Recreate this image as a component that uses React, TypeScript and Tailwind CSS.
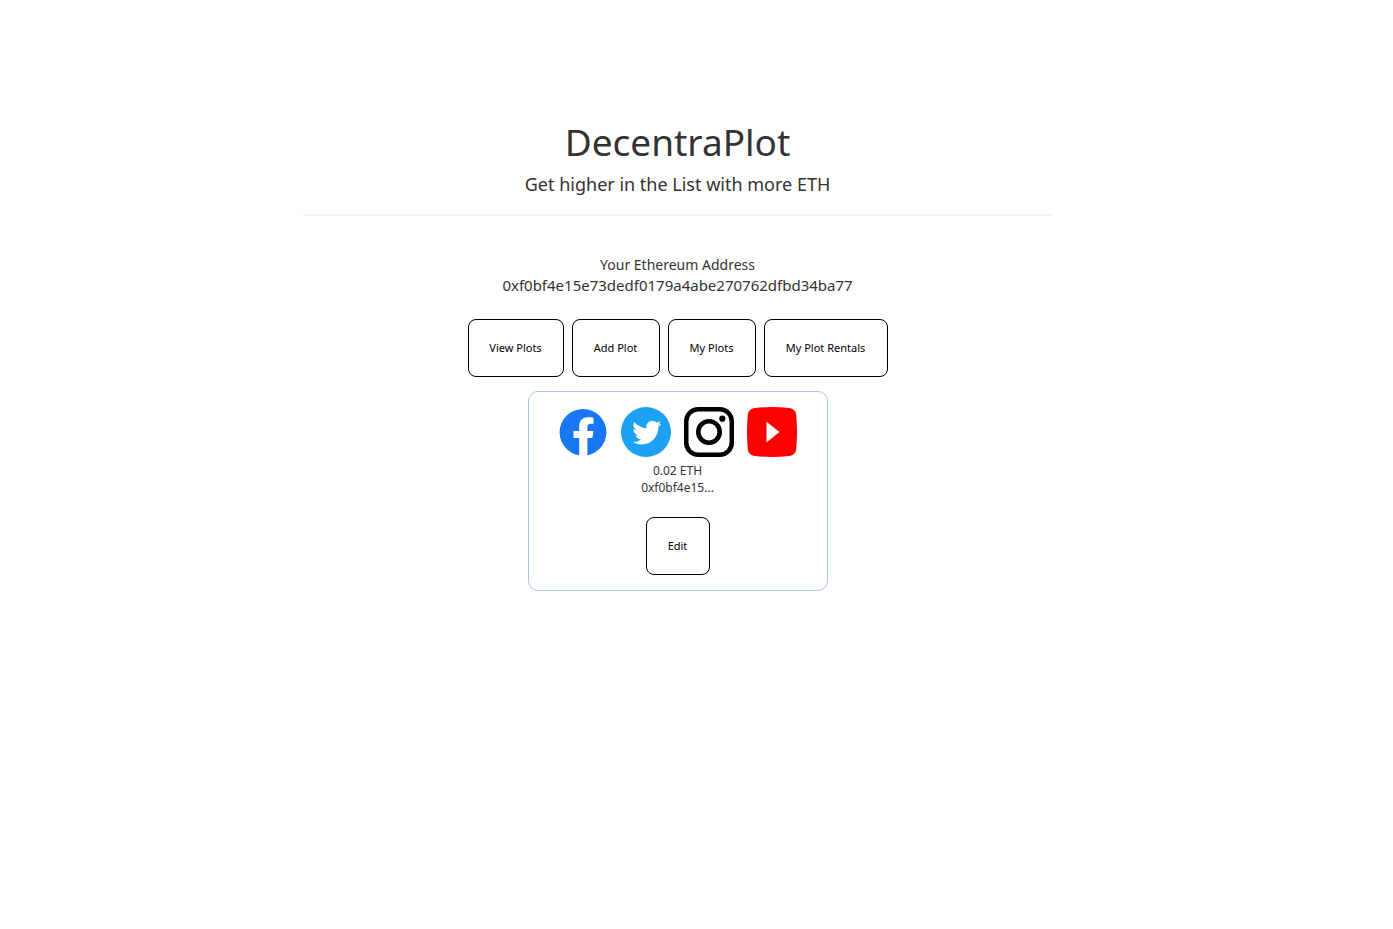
import React from "react";

const boxButton =
  "h-[58px] cursor-pointer rounded-lg border border-black bg-white text-[11px] leading-4 text-black hover:bg-gray-50";

const actions = [
  { label: "View Plots", width: "w-24" },
  { label: "Add Plot", width: "w-[88px]" },
  { label: "My Plots", width: "w-[88px]" },
  { label: "My Plot Rentals", width: "w-[124px]" },
];

function FacebookIcon() {
  return (
    <svg viewBox="0 0 50 50" className="size-[50px]" aria-hidden="true">
      <circle cx="25" cy="25.3" r="23.4" fill="#1877f2" />
      <path
        d="M21.2 50V31h-5.700v-6.900h5.700v-4.600c0-6.100 3.600-9.200 9.100-9.200 2.600 0 5.200.5 5.200.5v5.900h-2.600c-3 0-3.500 1.700-3.500 3.500v3.900h6l-1 6.900h-5V50z"
        fill="#fff"
      />
    </svg>
  );
}

function TwitterIcon() {
  return (
    <svg viewBox="0 0 50 50" className="size-[50px]" aria-hidden="true">
      <circle cx="25" cy="25" r="25" fill="#1da1f2" />
      <path
        transform="translate(11.300 11.200) scale(1.210)"
        d="M23.953 4.570a10 10 0 0 1-2.825.775 4.958 4.958 0 0 0 2.163-2.723c-.951.555-2.005.959-3.127 1.184a4.920 4.920 0 0 0-8.384 4.482C7.690 8.095 4.067 6.130 1.640 3.162a4.822 4.822 0 0 0-.666 2.475c0 1.710.870 3.213 2.188 4.096a4.904 4.904 0 0 1-2.228-.616v.060a4.923 4.923 0 0 0 3.946 4.827 4.996 4.996 0 0 1-2.212.085 4.936 4.936 0 0 0 4.604 3.417 9.867 9.867 0 0 1-6.102 2.105c-.390 0-.779-.023-1.170-.067a13.995 13.995 0 0 0 7.557 2.209c9.053 0 13.998-7.496 13.998-13.985 0-.210 0-.420-.015-.630A9.935 9.935 0 0 0 24 4.590z"
        fill="#fff"
      />
    </svg>
  );
}

function InstagramIcon() {
  return (
    <svg viewBox="0 0 50 50" className="size-[50px]" fill="none" aria-hidden="true">
      <rect x="2.250" y="2.250" width="45.500" height="45.500" rx="12" stroke="#000" strokeWidth="4.500" />
      <circle cx="25" cy="25" r="10.700" stroke="#000" strokeWidth="4.600" />
      <circle cx="38.300" cy="11.700" r="3.100" fill="#000" />
    </svg>
  );
}

function YoutubeIcon() {
  return (
    <svg viewBox="0 0 50 50" className="size-[50px]" aria-hidden="true">
      <path
        d="M8 1Q25-.8 42 1C46.500 1.500 48.800 4 49.200 8Q50.800 25 49.200 42C48.800 46 46.500 48.500 42 49Q25 50.800 8 49C3.500 48.500 1.200 46 .8 42Q-.8 25 .8 8C1.200 4 3.500 1.500 8 1Z"
        fill="#f00"
      />
      <path d="M19.500 14.700v20.800L32.500 25z" fill="#fff" />
    </svg>
  );
}

const socials = [
  { label: "Facebook", Icon: FacebookIcon },
  { label: "Twitter", Icon: TwitterIcon },
  { label: "Instagram", Icon: InstagramIcon },
  { label: "YouTube", Icon: YoutubeIcon },
];

export default function App() {
  return (
    <div className="min-h-screen bg-white pt-[118px] pr-[38px] font-['Noto_Sans',sans-serif] text-[#333]">
      <main className="mx-auto flex w-full max-w-[750px] flex-col items-center text-center">
        <header className="w-full border-b-2 border-[#f4f4f4] pb-4">
          <h1 className="text-[37px] leading-[48px]">DecentraPlot</h1>
          <p className="mt-1 text-lg leading-7">Get higher in the List with more ETH</p>
        </header>

        <section className="mt-[39px] leading-5">
          <p className="text-sm leading-5">Your Ethereum Address</p>
          <p className="text-[15px] leading-5">0xf0bf4e15e73dedf0179a4abe270762dfbd34ba77</p>
        </section>

        <nav className="mt-6 flex flex-wrap justify-center gap-2">
          {actions.map(({ label, width }) => (
            <button key={label} type="button" className={`${boxButton} ${width}`}>
              {label}
            </button>
          ))}
        </nav>

        <article className="mt-[14px] flex w-full max-w-[300px] flex-col items-center rounded-[10px] border border-[#a9c6ea] py-[15px]">
          <div className="flex gap-[13px]">
            {socials.map(({ label, Icon }) => (
              <a key={label} href="#" aria-label={label}>
                <Icon />
              </a>
            ))}
          </div>
          <div className="mt-[5px] text-xs leading-[17px]">
            <p>0.02 ETH</p>
            <p>0xf0bf4e15...</p>
          </div>
          <button type="button" className={`mt-[21px] w-16 ${boxButton}`}>
            Edit
          </button>
        </article>
      </main>
    </div>
  );
}
